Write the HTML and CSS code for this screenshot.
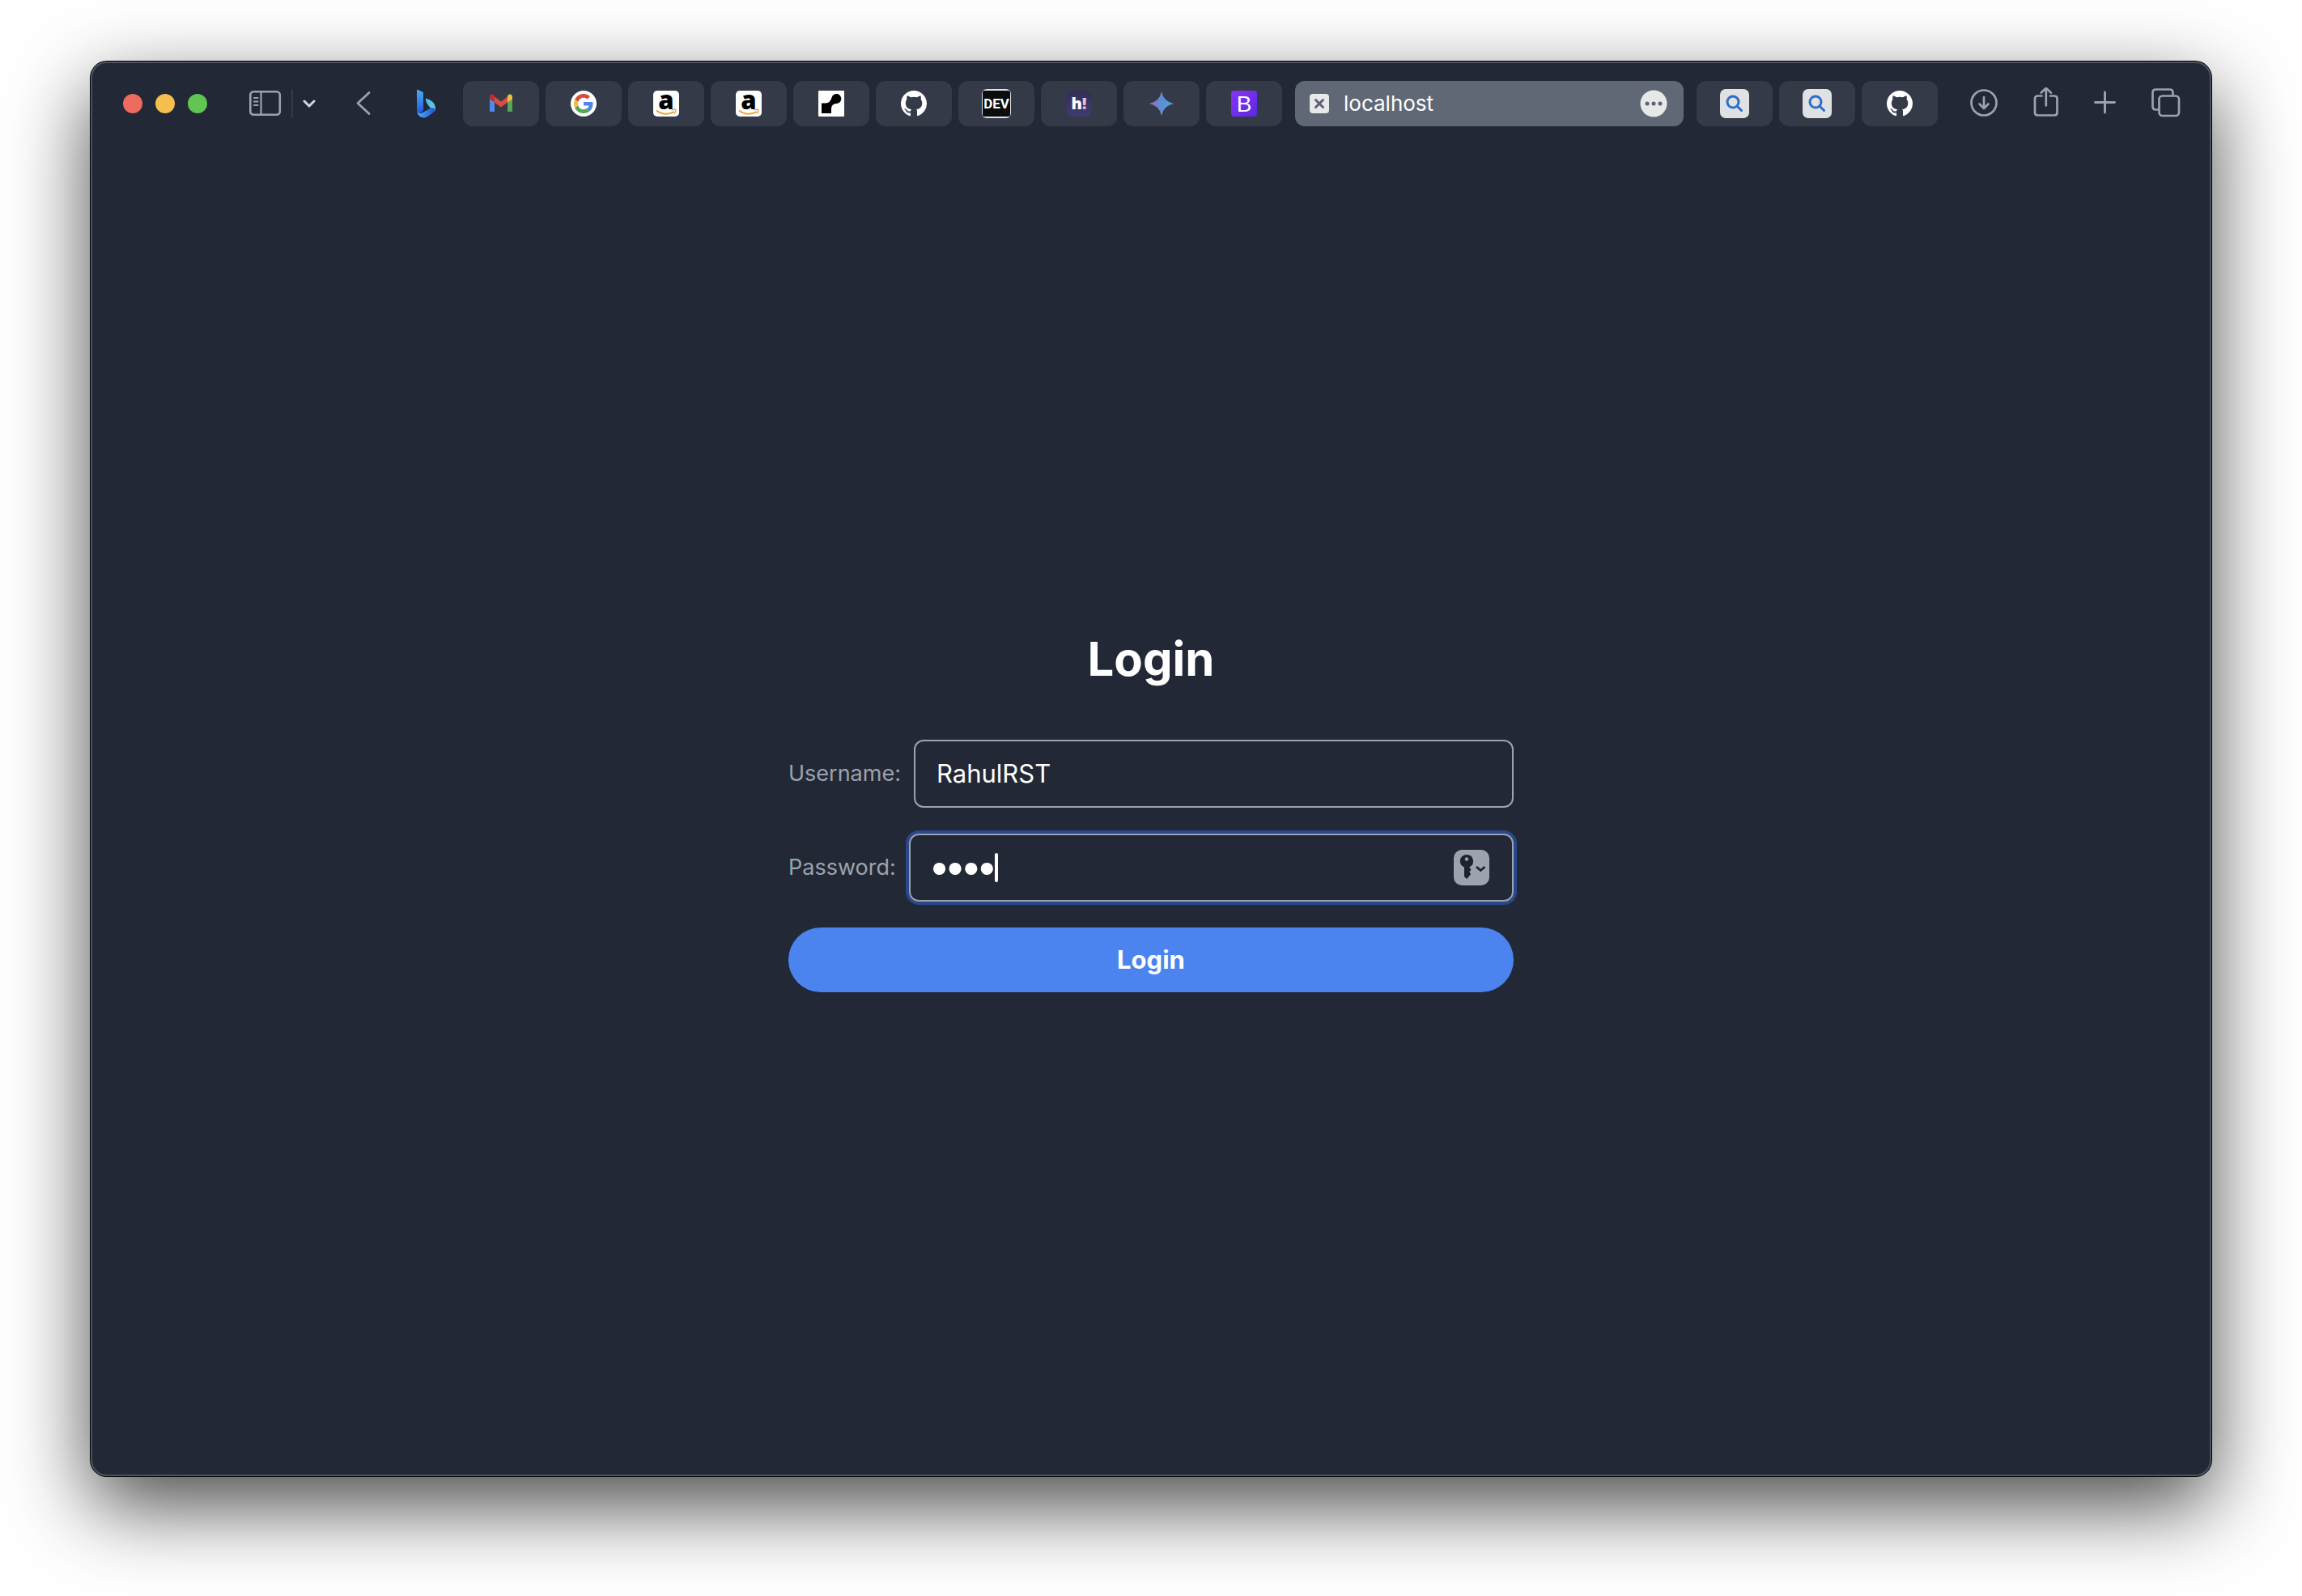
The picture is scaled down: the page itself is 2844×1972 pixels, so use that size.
FILE: index.html
```html
<!DOCTYPE html>
<html lang="en">
<head>
<meta charset="utf-8">
<meta name="viewport" content="width=device-width, initial-scale=1">
<title>localhost</title>
<link rel="stylesheet" href="styles.css">
</head>
<body>
<svg class="defs" aria-hidden="true">
  <defs>
    <symbol id="github" viewBox="0 0 16 16"><path d="M8 0C3.58 0 0 3.58 0 8c0 3.54 2.29 6.53 5.47 7.59.4.07.55-.17.55-.38 0-.19-.01-.82-.01-1.49-2.01.37-2.53-.49-2.69-.94-.09-.23-.48-.94-.82-1.13-.28-.15-.68-.52-.01-.53.63-.01 1.08.58 1.23.82.72 1.21 1.87.87 2.33.66.07-.52.28-.87.51-1.07-1.78-.2-3.64-.89-3.64-3.95 0-.87.31-1.59.82-2.15-.08-.2-.36-1.02.08-2.12 0 0 .67-.21 2.2.82.64-.18 1.32-.27 2-.27s1.36.09 2 .27c1.53-1.04 2.2-.82 2.2-.82.44 1.1.16 1.92.08 2.12.51.56.82 1.27.82 2.15 0 3.07-1.87 3.75-3.65 3.95.29.25.54.73.54 1.48 0 1.07-.01 1.93-.01 2.2 0 .21.15.46.55.38A8.01 8.01 0 0 0 16 8c0-4.42-3.58-8-8-8z" fill="#fff"/></symbol>
    <symbol id="amazon" viewBox="0 0 32 32">
      <rect width="32" height="32" rx="5" fill="#fff"/>
      <text x="16" y="23" text-anchor="middle" font-family="Open Sans, sans-serif" font-weight="800" font-size="31" fill="#000">a</text>
      <path d="M4 24.500C10 29.500 19 30 26 26.200" fill="none" stroke="#f0a23c" stroke-width="2"/>
      <path d="M23.200 24.100C25 23 27.500 23.200 28 23.600C28.300 25 27.500 27 26 28.400" fill="none" stroke="#f0a23c" stroke-width="1.400"/>
    </symbol>
    <symbol id="search" viewBox="0 0 36 36">
      <rect width="36" height="36" rx="7" fill="#dfe1e4"/>
      <circle cx="16" cy="16" r="7" fill="none" stroke="#2d6fc4" stroke-width="3"/>
      <path d="M21 21L26.500 26.500" stroke="#2d6fc4" stroke-width="3" stroke-linecap="round"/>
    </symbol>
    <linearGradient id="bing-a" x1="0" y1="0" x2="0" y2="1"><stop offset="0" stop-color="#45b0f0"/><stop offset="1" stop-color="#2350e0"/></linearGradient>
    <linearGradient id="bing-b" x1="0" y1="0" x2="1" y2="1"><stop offset="0" stop-color="#48b4f4"/><stop offset="1" stop-color="#5ed8c4"/></linearGradient>
    <linearGradient id="bing-c" x1="0" y1="0" x2="1" y2="0"><stop offset="0" stop-color="#4fb4ee"/><stop offset="1" stop-color="#1f4fe0"/></linearGradient>
    <linearGradient id="spark" x1="0" y1="0" x2="1" y2="0"><stop offset="0" stop-color="#9a6fc0"/><stop offset=".5" stop-color="#5b8fd0"/><stop offset="1" stop-color="#45a8e4"/></linearGradient>
    <linearGradient id="boot" x1="0" y1="0" x2="1" y2="1"><stop offset="0" stop-color="#8a33f4"/><stop offset="1" stop-color="#5a28e4"/></linearGradient>
    <linearGradient id="hash" x1="0" y1="0" x2="0" y2="1"><stop offset="0" stop-color="#322f58"/><stop offset="1" stop-color="#403c70"/></linearGradient>
  </defs>
</svg>

<div class="window">
  <header class="toolbar">
    <div class="lights">
      <button class="light light-close" aria-label="Close window"></button>
      <button class="light light-min" aria-label="Minimize window"></button>
      <button class="light light-max" aria-label="Zoom window"></button>
    </div>
    <div class="sidebar-tools">
      <button class="tool" aria-label="Show sidebar">
        <svg width="40" height="32" viewBox="0 0 40 32" fill="none" stroke="#9ca3af" stroke-width="2.600" stroke-linecap="round"><rect x="1.300" y="1.300" width="36.500" height="28.500" rx="4"/><path d="M14.500 2V30M6 9H10.500M6 13.500H10.500M6 18H10.500" stroke-width="2.200"/></svg>
      </button>
      <span class="divider"></span>
      <button class="tool" aria-label="Tab groups">
        <svg width="16" height="12" viewBox="0 0 16 12" fill="none" stroke="#d1d8e2" stroke-width="3" stroke-linecap="round" stroke-linejoin="round"><path d="M2 3L8 9L14 3"/></svg>
      </button>
    </div>
    <button class="tool back" aria-label="Back">
      <svg width="18" height="32" viewBox="0 0 18 32" fill="none" stroke="#9ca3af" stroke-width="2.800" stroke-linecap="round" stroke-linejoin="round"><path d="M16 2.500L2 15.500L16 28.500"/></svg>
    </button>
    <nav class="tabs" aria-label="Tabs">
      <button class="pinned" aria-label="Bing">
        <svg width="26" height="36" viewBox="0 0 26 36"><path d="M1 .5L8 3.500Q9 4 9 5.500V26L3.500 32Q1 29.500 1 26Z" fill="url(#bing-a)"/><path d="M12 11.500Q23 14.500 24 23Q24 26 22.500 28Q20 25 16.500 22Q13 18 12 14Z" fill="url(#bing-b)"/><path d="M1.500 28.500Q4 31.500 7.500 29.500L18 23.500Q23 22.500 23.500 26Q22.500 28.500 15 33.500Q10 37 5 34Q1.500 31.500 1.500 28.500Z" fill="url(#bing-c)"/></svg>
      </button>
      <div class="tab-group">
        <button class="tab" aria-label="Gmail">
          <svg width="30" height="24" viewBox="0 0 30 24"><path d="M1 5V20.500Q1 22 2.500 22H7V9Z" fill="#5288ee"/><path d="M29 5V20.500Q29 22 27.500 22H23V9Z" fill="#55a85a"/><path d="M7 3.500L15 9.500L23 3.500V10.500L15 16.500L7 10.500Z" fill="#db4d3f"/><path d="M1 4.500Q1 0 5 .5L7 2.500V10.500L1 6.500Z" fill="#b5332c"/><path d="M29 4.500Q29 0 25 .5L23 2.500V10.500L29 6.500Z" fill="#f3bc42"/></svg>
        </button>
        <button class="tab" aria-label="Google">
          <svg width="32" height="32" viewBox="0 0 32 32"><circle cx="16" cy="16" r="16" fill="#fff"/><g transform="translate(4 4)"><path d="M23.500 12.300c0-.8-.1-1.600-.2-2.300H12v4.500h6.500c-.3 1.500-1.100 2.800-2.400 3.600v3h3.900c2.300-2.100 3.500-5.200 3.500-8.800z" fill="#4f86ec"/><path d="M12 24c3.200 0 6-1.100 7.900-2.900l-3.900-3c-1.100.7-2.400 1.200-4 1.200-3.100 0-5.800-2.100-6.700-4.900h-4v3.100C3.300 21.400 7.300 24 12 24z" fill="#55a65a"/><path d="M5.300 14.400c-.5-1.500-.5-3.200 0-4.700V6.600h-4c-1.700 3.300-1.700 7.500 0 10.900z" fill="#f3bc42"/><path d="M12 4.800c1.800 0 3.300.6 4.600 1.800L20 3.200C17.900 1.200 15.200 0 12 0 7.300 0 3.300 2.700 1.300 6.600l4 3.100C6.200 6.900 8.900 4.800 12 4.800z" fill="#d94d3f"/></g></svg>
        </button>
        <button class="tab" aria-label="Amazon"><svg width="32" height="32"><use href="#amazon"/></svg></button>
        <button class="tab" aria-label="Amazon"><svg width="32" height="32"><use href="#amazon"/></svg></button>
        <button class="tab" aria-label="Render">
          <svg width="32" height="32" viewBox="0 0 32 32"><rect width="32" height="32" rx="1" fill="#fff"/><path d="M4 15.500H9Q15 15 16.500 8.500A6 6 0 1 1 22 16Q16.500 16.500 16 22V28H4Z" fill="#000"/></svg>
        </button>
        <button class="tab" aria-label="GitHub"><svg width="32" height="32"><use href="#github"/></svg></button>
        <button class="tab" aria-label="DEV Community">
          <svg width="36" height="36" viewBox="0 0 36 36"><rect width="36" height="36" rx="6" fill="#dfe1e4"/><rect x="1" y="2" width="34" height="32" rx="2" fill="#0b0d0c"/><text x="18" y="24" text-anchor="middle" font-family="Roboto, sans-serif" font-weight="700" font-size="17" fill="#fff">DEV</text></svg>
        </button>
        <button class="tab" aria-label="Hashnode">
          <svg width="32" height="32" viewBox="0 0 32 32"><rect width="32" height="32" rx="9" fill="url(#hash)"/><text x="16" y="23" text-anchor="middle" font-family="Open Sans, sans-serif" font-weight="800" font-size="20" fill="#fff">h<tspan fill="#f2b8dc">!</tspan></text></svg>
        </button>
        <button class="tab" aria-label="Gemini">
          <svg width="32" height="32" viewBox="0 0 32 32"><path d="M16 1Q18.500 13.500 31 16Q18.500 18.500 16 31Q13.500 18.500 1 16Q13.500 13.500 16 1Z" fill="url(#spark)"/></svg>
        </button>
        <button class="tab" aria-label="Bootstrap">
          <svg width="32" height="32" viewBox="0 0 32 32"><rect width="32" height="32" rx="4" fill="url(#boot)"/><text x="16" y="26" text-anchor="middle" font-family="Liberation Sans, sans-serif" font-size="28" fill="#fff">B</text></svg>
        </button>
      </div>
      <div class="tab-active">
        <button class="tool" aria-label="Close tab">
          <svg width="24" height="24" viewBox="0 0 24 24"><rect width="24" height="24" rx="4" fill="#e6e8ea"/><path d="M7.500 7.500L16.500 16.500M16.500 7.500L7.500 16.500" stroke="#5d6471" stroke-width="3" stroke-linecap="round"/></svg>
        </button>
        <span class="tab-title">localhost</span>
        <button class="tool" aria-label="Page menu">
          <svg width="34" height="34" viewBox="0 0 34 34"><circle cx="17" cy="17" r="16.500" fill="#e6e8ea"/><g fill="#5d6471"><circle cx="9" cy="17" r="2.500"/><circle cx="17" cy="17" r="2.500"/><circle cx="25" cy="17" r="2.500"/></g></svg>
        </button>
      </div>
      <div class="tab-group">
        <button class="tab" aria-label="Search"><svg width="36" height="36"><use href="#search"/></svg></button>
        <button class="tab" aria-label="Search"><svg width="36" height="36"><use href="#search"/></svg></button>
        <button class="tab" aria-label="GitHub"><svg width="32" height="32"><use href="#github"/></svg></button>
      </div>
    </nav>
    <div class="actions">
      <button class="tool" aria-label="Downloads">
        <svg width="36" height="40" viewBox="0 0 36 40" fill="none" stroke="#9ca3af" stroke-width="2.700" stroke-linecap="round" stroke-linejoin="round"><circle cx="18" cy="19" r="15.500"/><path d="M18 12V26M12.500 20.500L18 26L23.500 20.500"/></svg>
      </button>
      <button class="tool" aria-label="Share">
        <svg width="32" height="40" viewBox="0 0 32 40" fill="none" stroke="#9ca3af" stroke-width="2.700" stroke-linecap="butt" stroke-linejoin="round"><path d="M11.500 10.500H5.500Q2 10.500 2 14V31Q2 34.500 5.500 34.500H26Q29.500 34.500 29.500 31V14Q29.500 10.500 26 10.500H20"/><path d="M15.800 22.500V1M9.800 6.500L15.800 .8L21.800 6.500" stroke-linecap="round"/></svg>
      </button>
      <button class="tool" aria-label="New tab">
        <svg width="28" height="40" viewBox="0 0 28 40" fill="none" stroke="#9ca3af" stroke-width="2.900" stroke-linecap="round"><path d="M13.500 6V31M1.500 18.500H25.500"/></svg>
      </button>
      <button class="tool" aria-label="Tab overview">
        <svg width="36" height="40" viewBox="0 0 36 40" fill="none" stroke="#9ca3af" stroke-width="2.700" stroke-linejoin="round"><rect x="9.500" y="10.500" width="24.500" height="24.500" rx="4"/><path d="M9 27.500H5.500Q1.500 27.500 1.500 23.500V6.500Q1.500 2.500 5.500 2.500H22.500Q26.500 2.500 26.500 6.500V10"/></svg>
      </button>
    </div>
  </header>

  <main class="page">
    <form class="login">
      <h1 class="title">Login</h1>
      <div class="row">
        <label class="label" for="username">Username:</label>
        <div class="field"><input class="input" id="username" type="text" value="RahulRST"></div>
      </div>
      <div class="row">
        <label class="label" for="password">Password:</label>
        <div class="field field-focus">
          <input class="input input-password" id="password" type="password" value="demo">
          <span class="caret"></span>
          <button class="tool key" type="button" aria-label="Fill saved password">
            <svg width="44" height="44" viewBox="0 0 44 44"><rect width="44" height="44" rx="10" fill="#9ca3af"/><path d="M16 6A8 8 0 0 1 19.500 21.200V22L21.500 24.500L19.500 27L21 30.500L19 32.500V33L16 36L13 33V21.500A8 8 0 0 1 16 6Z" fill="#1c2330"/><circle cx="16" cy="11.500" r="2.200" fill="#9ca3af"/><path d="M28 21L33.300 25.500L38.500 21" fill="none" stroke="#1c2330" stroke-width="2.600"/></svg>
          </button>
        </div>
      </div>
      <button class="submit" type="submit">Login</button>
    </form>
  </main>
</div>
</body>
</html>
```
FILE: styles.css
```css
* {
  box-sizing: border-box;
}

body {
  margin: 0;
  min-height: 100vh;
  padding: 76px 112px 148px;
  display: flex;
  background: #fff;
  color: #fff;
  font-family: Inter, "Liberation Sans", sans-serif;
}

button {
  padding: 0;
  border: 0;
  background: none;
  color: inherit;
  font: inherit;
}

svg {
  display: block;
}

.defs {
  position: absolute;
  width: 0;
  height: 0;
}

.window {
  flex: 1;
  min-width: 0;
  display: flex;
  flex-direction: column;
  border-radius: 20px;
  background: #222835;
  box-shadow:
    inset 0 0 0 2px #4c535e,
    0 0 0 1px #000,
    0 36px 100px rgba(0, 0, 0, 0.72);
}

/* Browser toolbar */

.toolbar {
  display: flex;
  align-items: center;
  height: 104px;
  padding: 0 38px 0 40px;
}

.lights {
  display: flex;
  gap: 16px;
}

.light {
  width: 24px;
  height: 24px;
  border-radius: 50%;
}

.light-close {
  background: #ed6a5e;
}

.light-min {
  background: #f5bf4f;
}

.light-max {
  background: #61c554;
}

.sidebar-tools {
  display: flex;
  align-items: center;
  gap: 12px;
  margin-left: 52px;
}

.divider {
  width: 2px;
  height: 36px;
  background: #343a47;
}

.back {
  margin-left: 50px;
}

.tabs {
  flex: 1;
  min-width: 0;
  display: flex;
  align-items: center;
  gap: 16px;
  margin-left: 56px;
}

.pinned {
  margin-right: 16px;
}

.tab-group {
  display: flex;
  gap: 8px;
}

.tab {
  display: flex;
  align-items: center;
  justify-content: center;
  width: 94px;
  height: 56px;
  border-radius: 12px;
  background: #343a47;
}

.tab-active {
  flex: 1;
  display: flex;
  align-items: center;
  height: 56px;
  padding: 0 20px 0 18px;
  border-radius: 12px;
  background: #616875;
}

.tab-title {
  flex: 1;
  padding-left: 18px;
  font-size: 26px;
  line-height: 32px;
}

.actions {
  display: flex;
  align-items: center;
  gap: 43px;
  margin-left: 39px;
}

/* Login page */

.page {
  flex: 1;
  display: flex;
  align-items: center;
  justify-content: center;
}

.login {
  width: 100%;
  max-width: 896px;
  display: flex;
  flex-direction: column;
  gap: 32px;
}

.title {
  margin: 0 0 32px;
  font-size: 58px;
  font-weight: 700;
  line-height: 72px;
  text-align: center;
}

.row {
  display: flex;
  align-items: center;
  gap: 16px;
}

.label {
  color: #9ca3af;
  font-size: 27px;
  line-height: 40px;
}

.field {
  flex: 1;
  min-width: 0;
  display: flex;
  align-items: center;
  height: 84px;
  padding: 0 28px 0 26px;
  border: 2px solid #9ca3af;
  border-radius: 12px;
}

.field-focus {
  box-shadow: 0 0 0 4px #29478a;
}

.input {
  width: 100%;
  height: 48px;
  padding: 0;
  border: 0;
  outline: 0;
  background: none;
  color: #fff;
  font: inherit;
  font-size: 31px;
  line-height: 48px;
}

/* A larger face keeps the masking dots bold next to the caret */
.input-password {
  width: auto;
  field-sizing: content;
  font-family: "Liberation Sans", sans-serif;
  font-size: 56px;
}

.caret {
  width: 4px;
  height: 36px;
  border-radius: 2px;
  background: #fff;
}

.key {
  margin-left: auto;
}

.submit {
  height: 80px;
  border-radius: 40px;
  background: #4b84ee;
  font-size: 31px;
  font-weight: 700;
  line-height: 48px;
}
```
